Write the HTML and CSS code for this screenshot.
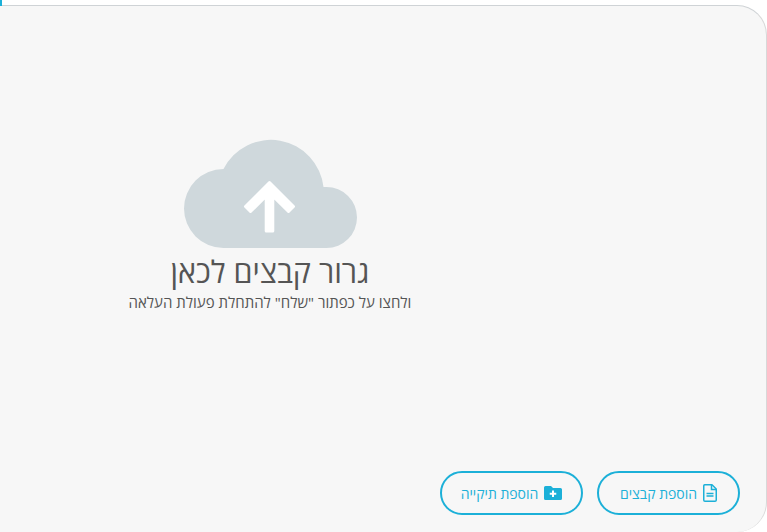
FILE: index.html
```html
<!DOCTYPE html>
<html lang="he" dir="rtl">
<head>
  <meta charset="UTF-8" />
  <meta name="viewport" content="width=device-width, initial-scale=1.0"/>
  <title>העלאת קבצים</title>
  <link rel="stylesheet" href="styles.css">
</head>
<body>
  <div class="tab-mark"></div>
  <div class="upload-panel">
    <div class="drop-zone">
      <svg class="cloud-icon" viewBox="183 139 174 110" width="174" height="110" aria-hidden="true">
        <path fill="#cfd8dc" d="M223.500 248a39.500 39.500 0 0 1 0-79a53 53 0 0 1 100 18h3a30.500 30.500 0 0 1 0 61z"/>
        <path fill="#fff" stroke="#fff" stroke-width="3" stroke-linejoin="round" d="M269.500 182.500L293.500 206.500L288.500 211.500L272.800 196V231H266.200V196L250.500 211.500L245.500 206.500z"/>
      </svg>
      <h2 class="drop-title">גרור קבצים לכאן</h2>
      <p class="drop-hint">ולחצו על כפתור "שלח" להתחלת פעולת העלאה</p>
    </div>
    <div class="actions">
      <button class="action-btn" type="button">
        <svg class="file-icon" viewBox="0 0 14 18" width="14" height="18" aria-hidden="true">
          <path fill="none" stroke="currentColor" stroke-width="1.500" stroke-linejoin="round" d="M1.750.750H9L13.250 5v11a1.250 1.250 0 0 1-1.250 1.250H2A1.250 1.250 0 0 1 .750 16V2A1.250 1.250 0 0 1 1.750.750z"/>
          <path fill="none" stroke="currentColor" stroke-width="1.500" d="M8.500 1v4.500H13M3.500 9.500h7M3.500 12h7"/>
        </svg>
        <span>הוספת קבצים</span>
      </button>
      <button class="action-btn" type="button">
        <svg class="folder-icon" viewBox="0 0 18 14" width="18" height="14" aria-hidden="true">
          <path fill="currentColor" d="M1.500 0h5.500l2 2h7.500A1.500 1.500 0 0 1 18 3.500v9a1.500 1.500 0 0 1-1.500 1.500h-15A1.500 1.500 0 0 1 0 12.500v-11A1.500 1.500 0 0 1 1.500 0z"/>
          <path fill="none" stroke="#fff" stroke-width="2" d="M9 4.500v6.500M5.750 7.750h6.500"/>
        </svg>
        <span>הוספת תיקייה</span>
      </button>
    </div>
  </div>
</body>
</html>
```

FILE: styles.css
```css
html, body {
  height: 100%;
}

body {
  font-family: "Open Sans", "Noto Sans", "Liberation Sans", sans-serif;
  background-color: white;
  margin: 0;
  padding-top: 5px;
  box-sizing: border-box;
  overflow: hidden;
  position: relative;
}

.tab-mark {
  position: absolute;
  top: 0;
  left: 0;
  width: 2px;
  height: 6px;
  background-color: #1cb0d8;
}

.upload-panel {
  box-sizing: border-box;
  height: 100%;
  background-color: #f7f7f7;
  border-top: 1px solid #cfd3d6;
  border-right: 1px solid #d8d8d8;
  border-radius: 0 30px 30px 0;
  display: flex;
  flex-direction: column;
  padding: 0 26px 17px 0;
}

.drop-zone {
  width: 540px;
  margin-right: 200px;
  padding-top: 133px;
  display: flex;
  flex-direction: column;
  align-items: center;
}

.cloud-icon {
  display: block;
}

.drop-title {
  margin: 3px 0 0;
  font-size: 30.500px;
  line-height: 38px;
  font-weight: 400;
  color: #555;
}

.drop-hint {
  margin: 2px 0 0;
  font-size: 15px;
  line-height: 20px;
  color: #555;
}

.actions {
  margin-top: auto;
  display: flex;
  gap: 14px;
}

.action-btn {
  box-sizing: border-box;
  width: 143px;
  height: 44px;
  padding: 0;
  display: flex;
  justify-content: center;
  align-items: center;
  gap: 6px;
  font-family: inherit;
  font-size: 14px;
  color: #1cb0d8;
  background: transparent;
  border: 2px solid #1cb0d8;
  border-radius: 22px;
  cursor: pointer;
}
```
